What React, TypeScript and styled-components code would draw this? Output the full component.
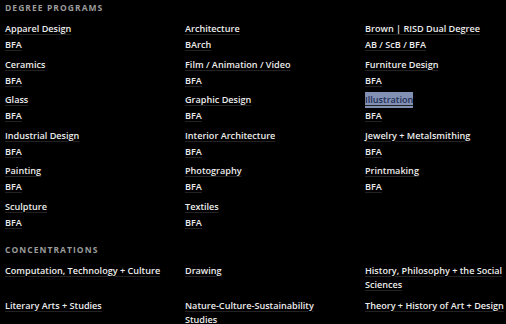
import React from "react";
import styled, { createGlobalStyle } from "styled-components";

const Global = createGlobalStyle`
  html, body { margin: 0; padding: 0; background: #000; }
  body { font-family: "Open Sans", "Liberation Sans", sans-serif; }
`;

const Page = styled.div`
  width: 506px;
  height: 324px;
  background: #000;
  padding: 0 0 0 5px;
  box-sizing: border-box;
  overflow: hidden;
`;

const Heading = styled.h2<{ $top: number }>`
  margin: ${(p) => p.$top}px 0 0 0;
  font-size: 8.5px;
  line-height: 16px;
  font-weight: 700;
  letter-spacing: 1.05px;
  color: #9b9b9b;
  text-transform: uppercase;
`;

const Grid = styled.div<{ $gap: number; $top: number }>`
  display: grid;
  grid-template-columns: 160px 160px 1fr;
  column-gap: 20px;
  row-gap: ${(p) => p.$gap}px;
  margin-top: ${(p) => p.$top}px;
`;

const Item = styled.div<{ $lh: number }>`
  display: flex;
  flex-direction: column;
  align-items: flex-start;
  font-size: 9.1px;
  line-height: ${(p) => p.$lh}px;
  color: #ececec;
  font-weight: 600;
`;

const Label = styled.span<{ $selected?: boolean }>`
  text-decoration: underline;
  text-decoration-color: #222;
  text-underline-offset: 2px;
  background: ${(p) => (p.$selected ? "#8190b3" : "transparent")};
  color: ${(p) => (p.$selected ? "#1f2d55" : "inherit")};
`;

const degrees: [string, string][] = [
  ["Apparel Design", "BFA"],
  ["Architecture", "BArch"],
  ["Brown | RISD Dual Degree", "AB / ScB / BFA"],
  ["Ceramics", "BFA"],
  ["Film / Animation / Video", "BFA"],
  ["Furniture Design", "BFA"],
  ["Glass", "BFA"],
  ["Graphic Design", "BFA"],
  ["Illustration", "BFA"],
  ["Industrial Design", "BFA"],
  ["Interior Architecture", "BFA"],
  ["Jewelry + Metalsmithing", "BFA"],
  ["Painting", "BFA"],
  ["Photography", "BFA"],
  ["Printmaking", "BFA"],
  ["Sculpture", "BFA"],
  ["Textiles", "BFA"],
];

const concentrations = [
  "Computation, Technology + Culture",
  "Drawing",
  "History, Philosophy + the Social Sciences",
  "Literary Arts + Studies",
  "Nature-Culture-Sustainability Studies",
  "Theory + History of Art + Design",
];

export default function App() {
  return (
    <Page>
      <Global />
      <Heading $top={0}>Degree Programs</Heading>
      <Grid $gap={3.5} $top={5}>
        {degrees.map(([name, deg]) => (
          <Item key={name} $lh={16}>
            <Label $selected={name === "Illustration"}>{name}</Label>
            <Label>{deg}</Label>
          </Item>
        ))}
      </Grid>
      <Heading $top={11}>Concentrations</Heading>
      <Grid $gap={7} $top={6}>
        {concentrations.map((c) => (
          <Item key={c} $lh={14}>
            <Label>{c}</Label>
          </Item>
        ))}
      </Grid>
    </Page>
  );
}
